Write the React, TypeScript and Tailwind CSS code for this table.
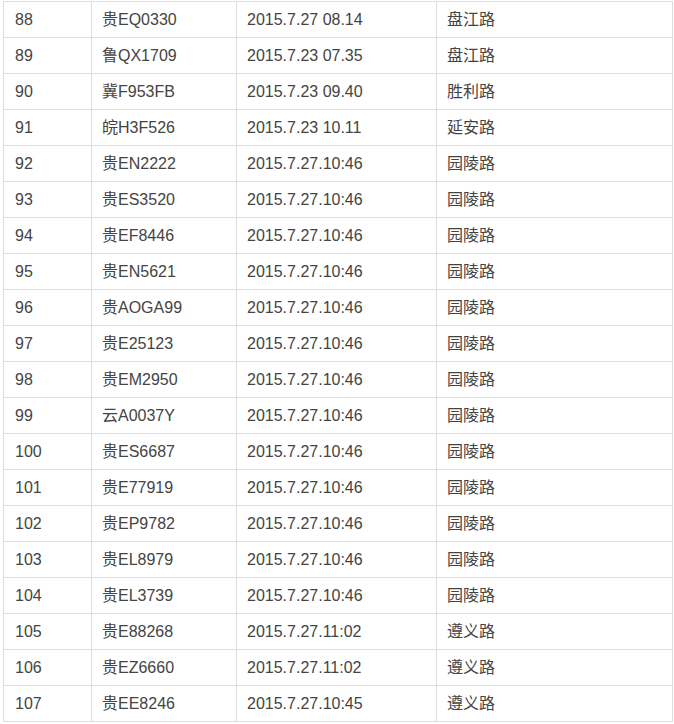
import React from 'react';

type Row = {
  no: string;
  plate: string;
  time: string;
  road: string;
};

const rows: Row[] = [
  { no: '88', plate: '贵EQ0330', time: '2015.7.27 08.14', road: '盘江路' },
  { no: '89', plate: '鲁QX1709', time: '2015.7.23 07.35', road: '盘江路' },
  { no: '90', plate: '冀F953FB', time: '2015.7.23 09.40', road: '胜利路' },
  { no: '91', plate: '皖H3F526', time: '2015.7.23 10.11', road: '延安路' },
  { no: '92', plate: '贵EN2222', time: '2015.7.27.10:46', road: '园陵路' },
  { no: '93', plate: '贵ES3520', time: '2015.7.27.10:46', road: '园陵路' },
  { no: '94', plate: '贵EF8446', time: '2015.7.27.10:46', road: '园陵路' },
  { no: '95', plate: '贵EN5621', time: '2015.7.27.10:46', road: '园陵路' },
  { no: '96', plate: '贵AOGA99', time: '2015.7.27.10:46', road: '园陵路' },
  { no: '97', plate: '贵E25123', time: '2015.7.27.10:46', road: '园陵路' },
  { no: '98', plate: '贵EM2950', time: '2015.7.27.10:46', road: '园陵路' },
  { no: '99', plate: '云A0037Y', time: '2015.7.27.10:46', road: '园陵路' },
  { no: '100', plate: '贵ES6687', time: '2015.7.27.10:46', road: '园陵路' },
  { no: '101', plate: '贵E77919', time: '2015.7.27.10:46', road: '园陵路' },
  { no: '102', plate: '贵EP9782', time: '2015.7.27.10:46', road: '园陵路' },
  { no: '103', plate: '贵EL8979', time: '2015.7.27.10:46', road: '园陵路' },
  { no: '104', plate: '贵EL3739', time: '2015.7.27.10:46', road: '园陵路' },
  { no: '105', plate: '贵E88268', time: '2015.7.27.11:02', road: '遵义路' },
  { no: '106', plate: '贵EZ6660', time: '2015.7.27.11:02', road: '遵义路' },
  { no: '107', plate: '贵EE8246', time: '2015.7.27.10:45', road: '遵义路' },
];

// cell widths include the right border
const cell = 'flex items-center pl-[10px] border-r border-[#dddddd] whitespace-nowrap';

function App() {
  return (
    <div
      className="bg-white min-h-screen pt-px text-[16px] text-[#444444]"
      style={{ fontFamily: '"Liberation Sans", Arial, "Noto Sans CJK SC", sans-serif' }}
    >
      <div className="ml-[3px] w-[670px] border-t border-l border-[#dddddd]">
        {rows.map((r) => (
          <div key={r.no} className="flex h-9 border-b border-[#dddddd]">
            <div className={`${cell} w-[88px] pl-[11px]`}>{r.no}</div>
            <div className={`${cell} w-[145px]`}>{r.plate}</div>
            <div className={`${cell} w-[200px]`}>{r.time}</div>
            <div className={`${cell} w-[236px]`}>{r.road}</div>
          </div>
        ))}
      </div>
    </div>
  );
}

export default App;
